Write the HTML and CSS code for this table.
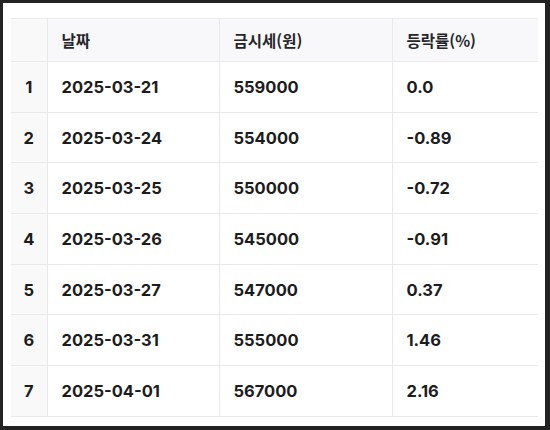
FILE: index.html
```html
<!DOCTYPE html>
<html lang="ko">
<head>
<meta charset="utf-8">
<link rel="stylesheet" href="styles.css">
</head>
<body>
<div class="frame">
  <table class="grid">
    <colgroup>
      <col class="c-idx"><col class="c-date"><col class="c-price"><col class="c-rate">
    </colgroup>
    <thead>
      <tr><th class="idx"></th><th>날짜</th><th>금시세(원)</th><th>등락률(%)</th></tr>
    </thead>
    <tbody>
      <tr><td class="idx">1</td><td>2025-03-21</td><td>559000</td><td>0.0</td></tr>
      <tr><td class="idx">2</td><td>2025-03-24</td><td>554000</td><td>-0.89</td></tr>
      <tr><td class="idx">3</td><td>2025-03-25</td><td>550000</td><td>-0.72</td></tr>
      <tr><td class="idx">4</td><td>2025-03-26</td><td>545000</td><td>-0.91</td></tr>
      <tr><td class="idx">5</td><td>2025-03-27</td><td>547000</td><td>0.37</td></tr>
      <tr><td class="idx">6</td><td>2025-03-31</td><td>555000</td><td>1.46</td></tr>
      <tr><td class="idx">7</td><td>2025-04-01</td><td>567000</td><td>2.16</td></tr>
    </tbody>
  </table>
</div>
</body>
</html>
```

FILE: styles.css
```css
html, body {
  margin: 0;
  padding: 0;
  width: 550px;
  height: 430px;
  background: #232323;
  overflow: hidden;
}
.frame {
  box-sizing: border-box;
  margin: 3px 5px 0 3px;
  width: 542px;
  height: 423px;
  background: #ffffff;
  padding: 15px 0 0 8px;
}
.grid {
  border-collapse: collapse;
  table-layout: fixed;
  width: 527px;
  font-family: Inter, "Noto Sans CJK KR", sans-serif;
  font-weight: 700;
  font-size: 16.5px;
  color: #1c1c1e;
}
.c-idx { width: 36px; }
.c-date { width: 172px; }
.c-price { width: 173px; }
.c-rate { width: 146px; }
.grid th, .grid td {
  text-align: left;
  padding: 0 0 0 14px;
  border-bottom: 1px solid #e9e9ec;
  border-right: 1px solid #e9e9ec;
  white-space: nowrap;
}
.grid th:last-child, .grid td:last-child { border-right: none; }
.grid thead tr { height: 43px; }
.grid th {
  background: #f8f8fa;
  border-top: 1px solid #ececef;
  font-family: "Noto Sans CJK KR", Inter, sans-serif;
  font-weight: 700;
  font-size: 15.5px;
  color: #26262a;
}
.grid tbody tr { height: 50.7px; }
.grid .idx {
  padding: 0;
  text-align: center;
  background: #f9f9fa;
}
```
